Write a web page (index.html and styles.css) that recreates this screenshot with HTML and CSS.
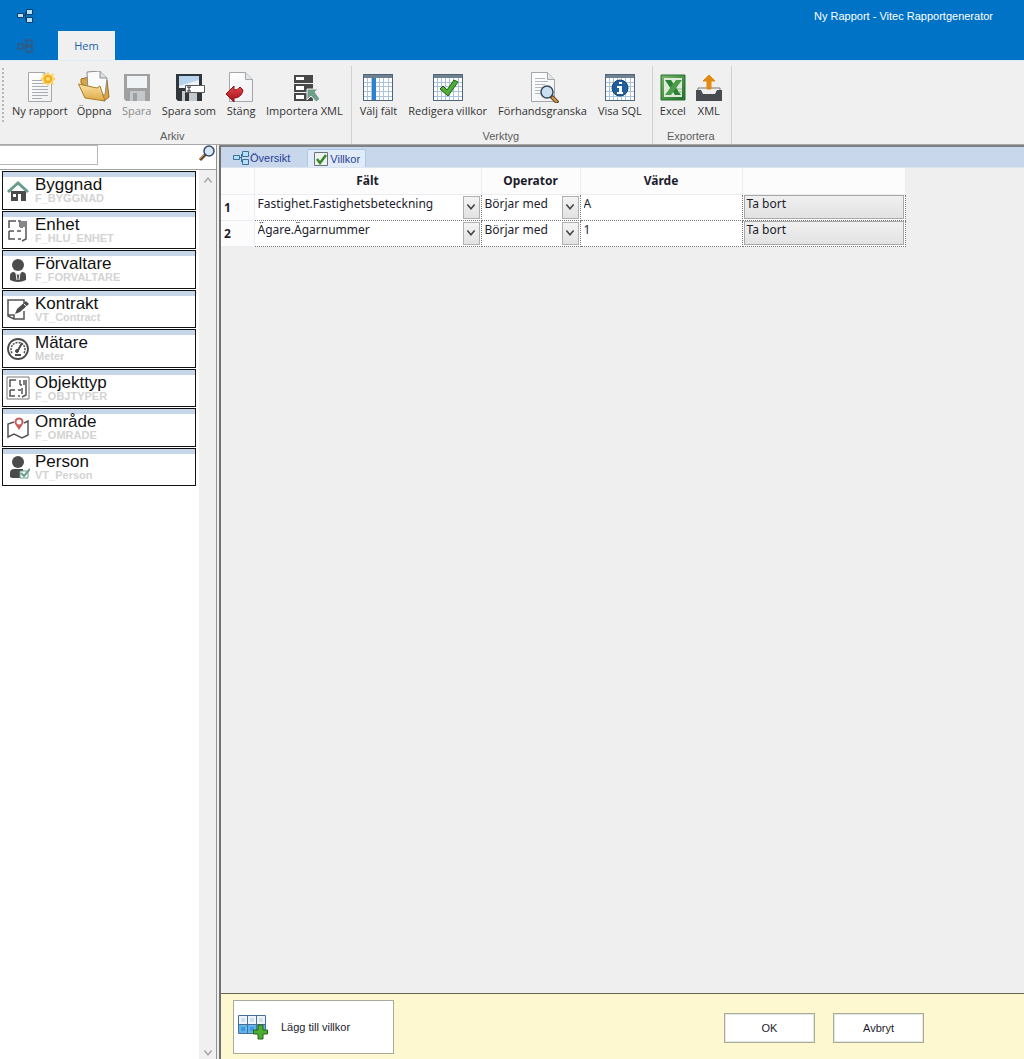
FILE: index.html
```html
<!DOCTYPE html>
<html lang="sv">
<head>
    <meta charset="UTF-8">
    <meta name="viewport" content="width=device-width, initial-scale=1.0">
    <title>Ny Rapport - Vitec Rapportgenerator</title>
    <link rel="stylesheet" href="styles.css">
</head>
<body>
    <!-- Shared shapes -->
    <svg class="defs" width="0" height="0" aria-hidden="true">
        <defs>
            <linearGradient id="folderFill" x1="0" y1="0" x2="0" y2="1">
                <stop offset="0" stop-color="#fbe3a0"/>
                <stop offset="1" stop-color="#dda844"/>
            </linearGradient>
            <linearGradient id="excelFill" x1="0" y1="0" x2="1" y2="1">
                <stop offset="0" stop-color="#78b868"/>
                <stop offset="1" stop-color="#1f6e2c"/>
            </linearGradient>
            <linearGradient id="pageFill" x1="0" y1="0" x2="1" y2="1">
                <stop offset="0" stop-color="#fff"/>
                <stop offset="1" stop-color="#eef0f2"/>
            </linearGradient>
            <linearGradient id="redFill" x1="0" y1="0" x2="0" y2="1">
                <stop offset="0" stop-color="#e4484c"/>
                <stop offset="1" stop-color="#a30f18"/>
            </linearGradient>
            <symbol id="page" viewBox="0 0 32 32">
                <path d="M4.500 1.500H20.500L27.500 8.500V30.500H4.500Z" fill="url(#pageFill)" stroke="#a3a6aa"/>
                <path d="M20.500 1.500V8.500H27.500" fill="#e4e6e8" stroke="#a3a6aa"/>
            </symbol>
            <symbol id="grid" viewBox="0 0 32 32">
                <path d="M1.500 3.500H30.500V29.500H1.500Z" fill="#fff" stroke="#506478"/>
                <path d="M1 3H31V7H1Z" fill="#6f8090"/>
                <path d="M5.500 7V29M9.500 7V29M13.500 7V29M17.500 7V29M21.500 7V29M26.500 7V29M2 11.500H30M2 15.500H30M2 20.500H30M2 25.500H30" stroke="#a9c3dc"/>
                <path d="M1.500 3.500H30.500V29.500H1.500Z" fill="none" stroke="#506478"/>
            </symbol>
            <symbol id="floppy" viewBox="0 0 32 32">
                <path d="M3 3H29V30H5L3 28Z"/>
                <path d="M6 5H26V17H6Z" fill="#f0f3f6"/>
                <path d="M9 20H24V30H9Z" fill="#c5c8cb"/>
                <path d="M12 22H16V30H12Z"/>
            </symbol>
            <symbol id="nodes" viewBox="0 0 16 14">
                <path d="M0.500 4.500H6.500V8.500H0.500ZM9.500 0.500H15.500V5.500H9.500ZM9.500 8.500H15.500V13.500H9.500Z" fill="#b4e0f7" stroke="currentColor"/>
                <path d="M7 6.500H8.500M8.500 3V11" fill="none" stroke="currentColor"/>
            </symbol>
            <symbol id="plan" viewBox="0 0 24 24">
                <path d="M10 3H3V10M3 13V21H9M12 21H15M3 13H8M11 13H15M14 3V9M14 9H17M17 3V9M20 3V21L16 23M12 3H15" fill="none" stroke="#555" stroke-width="1.500"/>
            </symbol>
            <symbol id="chevron" viewBox="0 0 10 10">
                <path d="M2 3L5 6.500L8 3" fill="none" stroke="currentColor" stroke-width="1.300"/>
            </symbol>
        </defs>
    </svg>

    <div class="app">
        <header class="titlebar">
            <div class="title-row">
                <svg class="app-icon" viewBox="0 0 16 14"><use href="#nodes"/></svg>
                <h1>Ny Rapport - Vitec Rapportgenerator</h1>
            </div>
            <div class="menu-row">
                <button class="app-menu" aria-label="Meny">
                    <svg viewBox="0 0 16 14"><path d="M1 5H6V10H1ZM9 1H15V6H9ZM9 8H15V13H9ZM6 7H9" fill="none" stroke="#35597c" stroke-width="1.500"/></svg>
                </button>
                <button class="menu-tab">Hem</button>
            </div>
        </header>

        <nav class="ribbon">
            <div class="grip"></div>
            <section class="group group-file">
                <div class="tools">
                    <button class="tool">
                        <svg viewBox="0 0 32 32">
                            <use href="#page"/>
                            <path d="M8 9.500H18M8 12.500H22M8 15.500H24M8 18.500H24M8 21.500H24M8 24.500H24M8 27.500H18" stroke="#a9acb0"/>
                            <path d="M24 0L26 4L30 2L29 6L32 8L29 10L30 14L26 12L24 16L22 12L18 14L19 10L16 8L19 6L18 2L22 4Z" fill="#fbd468"/>
                            <circle cx="24" cy="8" r="4" fill="#f6a91a"/>
                            <circle cx="24" cy="8" r="2" fill="#ffe480"/>
                        </svg>
                        <span>Ny rapport</span>
                    </button>
                    <button class="tool">
                        <svg viewBox="0 0 32 32">
                            <path d="M3 12V8L11 6L13 9H29L31 26L26 30Z" fill="#d8a542" stroke="#9b7224"/>
                            <path d="M9 1L22 0L29 7L27 24L10 20Z" fill="#fafbfc" stroke="#8b8e92"/>
                            <path d="M22 0L22 7H29" fill="#dde0e3" stroke="#8b8e92"/>
                            <path d="M0.500 13L19 17L22 15L27 30L7 27Z" fill="url(#folderFill)" stroke="#a87d2c"/>
                        </svg>
                        <span>Öppna</span>
                    </button>
                    <button class="tool" disabled>
                        <svg viewBox="0 0 32 32" fill="#a0a0a0"><use href="#floppy"/></svg>
                        <span>Spara</span>
                    </button>
                    <button class="tool">
                        <svg viewBox="0 0 32 32" fill="#30363c">
                            <use href="#floppy"/>
                            <path d="M6 5H26V9L6 15Z" fill="#b7d3ed"/>
                            <path d="M12.500 14.500H31.500V21.500H12.500Z" fill="#fff" stroke="#555b61"/>
                            <path d="M14 16H18M16 16V20M14 20H18" stroke="#222"/>
                        </svg>
                        <span>Spara som</span>
                    </button>
                    <button class="tool">
                        <svg viewBox="0 0 32 32">
                            <use href="#page"/>
                            <path d="M1 23L9 15V19C12 19 13 18 15 16L18 19C17 25 13 27 9 27V31Z" fill="url(#redFill)" stroke="#8f1118"/>
                        </svg>
                        <span>Stäng</span>
                    </button>
                    <button class="tool">
                        <svg viewBox="0 0 32 32">
                            <path d="M6 4H25V12H6ZM6 13H25V21H6ZM6 22H25V30H6Z" fill="#484848"/>
                            <path d="M8 6H16V9H8ZM8 15H16V19H8ZM8 24H16V28H8Z" fill="#fff"/>
                            <path d="M19 18H30L27 21L32 28L28 31L23 25L19 29Z" fill="#6f9e8b" stroke="#f0f0f0"/>
                        </svg>
                        <span>Importera XML</span>
                    </button>
                </div>
                <h2>Arkiv</h2>
            </section>
            <section class="group group-tools">
                <div class="tools">
                    <button class="tool">
                        <svg viewBox="0 0 32 32"><use href="#grid"/><path d="M10 7H14V29H10Z" fill="#2b82cf"/></svg>
                        <span>Välj fält</span>
                    </button>
                    <button class="tool">
                        <svg viewBox="0 0 32 32"><use href="#grid"/><path d="M8 18L11 15L15 19L22 9L26 11L16 25Z" fill="#4fae35" stroke="#1f5a16"/></svg>
                        <span>Redigera villkor</span>
                    </button>
                    <button class="tool">
                        <svg viewBox="0 0 32 32">
                            <use href="#page"/>
                            <path d="M8 7.500H18M8 10.500H21M8 13.500H18M8 16.500H15M8 19.500H14M8 22.500H14" stroke="#b5b8bc"/>
                            <path d="M24 25L31 32" stroke="#5b3d20" stroke-width="4"/>
                            <path d="M25 26L30 31" stroke="#dc9c4c" stroke-width="2"/>
                            <circle cx="20" cy="21" r="6" fill="#cbe0f3" stroke="#3a4a59" stroke-width="1.500"/>
                        </svg>
                        <span>Förhandsgranska</span>
                    </button>
                    <button class="tool">
                        <svg viewBox="0 0 32 32">
                            <use href="#grid"/>
                            <circle cx="16" cy="17" r="8" fill="#1f5f9f" stroke="#174672"/>
                            <path d="M15 11H18V13H15ZM13 15H18V21H19V23H13V21H15V17H13Z" fill="#fff"/>
                        </svg>
                        <span>Visa SQL</span>
                    </button>
                </div>
                <h2>Verktyg</h2>
            </section>
            <section class="group group-export">
                <div class="tools">
                    <button class="tool">
                        <svg viewBox="0 0 32 32">
                            <path d="M4 4H28V29H4Z" fill="url(#excelFill)" stroke="#286f30"/>
                            <path d="M7 7H25V26H7Z" fill="#dcebd8"/>
                            <path d="M8 9H14L24 24H18Z" fill="#2c8138"/>
                            <path d="M19 9H25L14 24H8Z" fill="#4b9d4b"/>
                            <path d="M20 18H25M21 21H25" stroke="#8bbd88"/>
                        </svg>
                        <span>Excel</span>
                    </button>
                    <button class="tool">
                        <svg viewBox="0 0 32 32">
                            <path d="M3 19H8L10 23H22L24 19H29V30H3Z" fill="#484b50"/>
                            <path d="M5 19V17H27V19" fill="none" stroke="#777"/>
                            <path d="M16 4L22 10H18V18H14V10H10Z" fill="#e28a12" stroke="#e28a12"/>
                        </svg>
                        <span>XML</span>
                    </button>
                </div>
                <h2>Exportera</h2>
            </section>
        </nav>

        <div class="workspace">
            <aside class="sidebar">
                <div class="search">
                    <input type="text" aria-label="Sök">
                    <button aria-label="Sök">
                        <svg viewBox="0 0 18 18">
                            <path d="M2 15L8 9" stroke="#684423" stroke-width="3"/>
                            <path d="M2 14L6 10" stroke="#c98a52" stroke-width="1"/>
                            <circle cx="11" cy="6" r="5" fill="#d5e8f7" stroke="#354a66" stroke-width="1.500"/>
                        </svg>
                    </button>
                </div>
                <div class="list-area">
                    <ul class="entities">
                        <li>
                            <svg viewBox="0 0 24 24"><path d="M5 12H20V22H15V15H12V22H5Z" fill="#4b4b4b"/><path d="M7 15H10V18H7Z" fill="#fff"/><path d="M2 13L12 4L22 13" fill="none" stroke="#6a9d89" stroke-width="3"/></svg>
                            <div><strong>Byggnad</strong><small>F_BYGGNAD</small></div>
                        </li>
                        <li>
                            <svg viewBox="0 0 24 24"><use href="#plan"/><path d="M14 3H20V9H14Z" fill="#888"/></svg>
                            <div><strong>Enhet</strong><small>F_HLU_ENHET</small></div>
                        </li>
                        <li>
                            <svg viewBox="0 0 24 24"><circle cx="12" cy="7" r="6" fill="#4b4b4b"/><path d="M4 22V18Q4 14 8 14L12 17L16 14Q20 14 20 18V22Q12 26 4 22Z" fill="#4b4b4b"/><path d="M10 15L11 22M14 15L13 22" stroke="#fff"/></svg>
                            <div><strong>Förvaltare</strong><small>F_FORVALTARE</small></div>
                        </li>
                        <li>
                            <svg viewBox="0 0 24 24"><path d="M18 14V22H8L2 19V3H18V6M2 18L8 18V22" fill="none" stroke="#555" stroke-width="1.500"/><path d="M9 17L11 12L20 4L23 7L14 15Z" fill="#4b4b4b"/><path d="M18 7L21 10" stroke="#fff"/></svg>
                            <div><strong>Kontrakt</strong><small>VT_Contract</small></div>
                        </li>
                        <li>
                            <svg viewBox="0 0 24 24" fill="none" stroke="#4b4b4b"><circle cx="12" cy="12" r="10" stroke-width="1.800"/><path d="M6 16A7 7 0 1 1 18 16" stroke-width="1.500" stroke-dasharray="2 1"/><path d="M11 15L16 6M9 18H15" stroke-width="2"/><circle cx="11" cy="14" r="1.500" fill="#4b4b4b"/></svg>
                            <div><strong>Mätare</strong><small>Meter</small></div>
                        </li>
                        <li>
                            <svg viewBox="0 0 24 24"><path d="M1 1H23V23H1Z" fill="none" stroke="#777"/><path d="M10 4H4V11M4 14V20H9M4 14H9M12 14H15M14 4V9M18 4V9M14 9H16M20 4V19L16 21M12 20H14M16 12V18" fill="none" stroke="#555" stroke-width="1.500"/></svg>
                            <div><strong>Objekttyp</strong><small>F_OBJTYPER</small></div>
                        </li>
                        <li>
                            <svg viewBox="0 0 24 24"><path d="M8 6L2 8V21L8 18L16 22L22 19V5L18 7" fill="none" stroke="#555" stroke-width="1.500"/><path d="M13 14L9 8A4.500 4.500 0 1 1 17 8Z" fill="#c85b58"/><circle cx="13" cy="6" r="2.500" fill="#fff"/></svg>
                            <div><strong>Område</strong><small>F_OMRADE</small></div>
                        </li>
                        <li>
                            <svg viewBox="0 0 24 24"><circle cx="12" cy="7" r="6" fill="#4b4b4b"/><path d="M4 22V18Q4 14 8 14H17V23H6Z" fill="#4b4b4b"/><path d="M14 16H22V23H14Z" fill="#fff" stroke="#6a9d89"/><path d="M15 18L18 21L24 14" fill="none" stroke="#6a9d89" stroke-width="2"/></svg>
                            <div><strong>Person</strong><small>VT_Person</small></div>
                        </li>
                    </ul>
                    <div class="scrollbar">
                        <svg class="up" viewBox="0 0 10 10"><use href="#chevron"/></svg>
                        <svg viewBox="0 0 10 10"><use href="#chevron"/></svg>
                    </div>
                </div>
            </aside>

            <main class="content">
                <div class="tabs">
                    <button class="tab">
                        <svg class="tab-nodes" viewBox="0 0 16 14"><use href="#nodes"/></svg>
                        Översikt
                    </button>
                    <button class="tab active">
                        <svg viewBox="0 0 16 16"><path d="M1.500 1.500H14.500V14.500H1.500Z" fill="#eef2ee" stroke="#68747c"/><path d="M4 8L7 12L13 4" fill="none" stroke="#39842c" stroke-width="2.500"/></svg>
                        Villkor
                    </button>
                </div>
                <div class="table-area">
                    <table>
                        <colgroup>
                            <col class="col-number">
                            <col class="col-field">
                            <col class="col-operator">
                            <col class="col-value">
                            <col class="col-action">
                        </colgroup>
                        <thead>
                            <tr><th></th><th>Fält</th><th>Operator</th><th>Värde</th><th></th></tr>
                        </thead>
                        <tbody>
                            <tr>
                                <th scope="row">1</th>
                                <td><div class="dropdown"><select aria-label="Fält"><option>Fastighet.Fastighetsbeteckning</option></select><span><svg viewBox="0 0 10 10"><use href="#chevron"/></svg></span></div></td>
                                <td><div class="dropdown"><select aria-label="Operator"><option>Börjar med</option></select><span><svg viewBox="0 0 10 10"><use href="#chevron"/></svg></span></div></td>
                                <td><input type="text" aria-label="Värde" value="A"></td>
                                <td><button class="remove">Ta bort</button></td>
                            </tr>
                            <tr>
                                <th scope="row">2</th>
                                <td><div class="dropdown"><select aria-label="Fält"><option>Ägare.Ägarnummer</option></select><span><svg viewBox="0 0 10 10"><use href="#chevron"/></svg></span></div></td>
                                <td><div class="dropdown"><select aria-label="Operator"><option>Börjar med</option></select><span><svg viewBox="0 0 10 10"><use href="#chevron"/></svg></span></div></td>
                                <td><input type="text" aria-label="Värde" value="1"></td>
                                <td><button class="remove">Ta bort</button></td>
                            </tr>
                        </tbody>
                    </table>
                </div>
                <footer class="actions">
                    <button class="add">
                        <svg viewBox="0 0 30 26">
                            <path d="M0.500 1.500H27.500V19.500H0.500Z" fill="#eef4fa" stroke="#44709b"/>
                            <path d="M1 10H27V19H1Z" fill="#62b4e8"/>
                            <path d="M9.500 1V20M18.500 1V20M0 10.500H28" stroke="#44709b"/>
                            <path d="M3 4H7V8H3ZM12 4H16V8H12ZM21 4H25V8H21Z" fill="#cfdff0"/>
                            <path d="M3 13H7V17H3ZM12 13H16V17H12Z" fill="#399bdb"/>
                            <path d="M20 11H25V16H29.500V20H25V25H20V20H15.500V16H20Z" fill="#4fae2e" stroke="#22651a"/>
                        </svg>
                        Lägg till villkor
                    </button>
                    <div class="confirm">
                        <button>OK</button>
                        <button>Avbryt</button>
                    </div>
                </footer>
            </main>
        </div>
    </div>
</body>
</html>
```
FILE: styles.css
```css
* {
    box-sizing: border-box;
}
body {
    margin: 0;
    font-family: "Liberation Sans", Arial, sans-serif;
    font-size: 11px;
    color: #1c1c2c;
    background-color: #f0f0f0;
}
button, input, select {
    font: inherit;
    color: inherit;
    margin: 0;
    padding: 0;
    border: none;
    border-radius: 0;
    background: none;
}
h1, h2 {
    margin: 0;
    font-weight: normal;
}
svg {
    display: block;
    flex: none;
}
.defs {
    position: absolute;
}
.app {
    display: flex;
    flex-direction: column;
    min-height: 100vh;
}

/* Title bar */
.titlebar {
    background-color: #0173c7;
}
.title-row {
    display: flex;
    justify-content: space-between;
    align-items: center;
    height: 31px;
    padding: 0 31px 0 17px;
}
.app-icon {
    width: 16px;
    height: 14px;
    color: #123d66;
}
h1 {
    font-size: 11px;
    color: #fff;
}
.menu-row {
    display: flex;
    height: 29px;
}
.app-menu {
    width: 58px;
    padding-left: 17px;
}
.app-menu svg {
    width: 16px;
    height: 14px;
}
.menu-tab {
    width: 57px;
    font-family: "Open Sans", sans-serif;
    color: #2464ae;
    background-color: #f0f0f0;
}

/* Ribbon */
.ribbon {
    display: flex;
    height: 85px;
    padding-top: 5px;
    border-top: 1px solid #dceef8;
    border-bottom: 1px solid #a8a8a8;
}
.grip {
    width: 4px;
    height: 54px;
    margin-top: 2px;
    border-right: 2px dotted #b8b8b8;
}
.group {
    display: flex;
    flex-direction: column;
    justify-content: space-between;
    padding: 5px 4px 1px;
    border-right: 1px solid #d0d0d0;
}
.tools {
    display: flex;
    gap: 1px;
}
.tool {
    display: flex;
    flex-direction: column;
    align-items: center;
    gap: 1px;
    padding: 0 4px;
    font-family: "Open Sans", sans-serif;
    line-height: 14px;
    color: #333;
    white-space: nowrap;
}
.tool svg {
    width: 32px;
    height: 32px;
}
.tool:disabled {
    color: #8c8c8c;
}
.group-file h2 {
    padding-right: 10px;
}
.group-tools {
    padding-right: 6px;
}
.group-tools .tools {
    gap: 3px;
}
.group-export {
    padding-left: 2px;
}
.group-export .tools {
    gap: 0;
}
.group-export .tool {
    padding: 0 2px;
}
h2 {
    font-size: 11px;
    line-height: 14px;
    text-align: center;
    color: #5c5c5c;
}

/* Sidebar */
.workspace {
    display: flex;
    flex: 1;
}
.sidebar {
    display: flex;
    flex-direction: column;
    flex: none;
    width: 217px;
    background-color: #fff;
    border-right: 1px solid #929292;
}
.search {
    display: flex;
    justify-content: space-between;
    align-items: flex-start;
    height: 25px;
    border-bottom: 1px solid #a0a0a0;
}
.search input {
    width: 98px;
    height: 20px;
    border: 1px solid #b8b8b8;
    border-left: none;
}
.search svg {
    width: 18px;
    height: 18px;
}
.list-area {
    display: flex;
    justify-content: space-between;
    flex: 1;
}
.entities {
    display: grid;
    grid-template-rows: repeat(8, 1fr);
    gap: 1px;
    align-self: flex-start;
    width: 194px;
    min-height: 315px;
    margin: 1px 0 0 2px;
    padding: 0;
    list-style: none;
}
.entities li {
    display: flex;
    align-items: center;
    gap: 5px;
    padding: 1px 0 0 3px;
    border: 1px solid #111;
    box-shadow: inset 0 5px #c8d6ea;
}
.entities svg {
    width: 24px;
    height: 24px;
}
.entities strong {
    display: block;
    font-size: 17px;
    font-weight: normal;
    line-height: 16px;
    color: #111;
}
.entities small {
    display: block;
    font-size: 11px;
    font-weight: bold;
    line-height: 11px;
    color: #d3d3d3;
}
.scrollbar {
    display: flex;
    flex-direction: column;
    justify-content: space-between;
    align-items: center;
    width: 17px;
    padding: 4px 0 0;
    color: #a8a8a8;
    background-color: #f0f0f0;
}
.scrollbar svg {
    width: 12px;
    height: 12px;
}
.scrollbar .up {
    transform: rotate(180deg);
}

/* Conditions */
.content {
    display: flex;
    flex-direction: column;
    flex: 1;
    margin-left: 2px;
    border-top: 2px solid #808080;
    border-left: 2px solid #707070;
    background-color: #efefef;
}
.tabs {
    display: flex;
    gap: 5px;
    height: 21px;
    padding: 2px 0 0 4px;
    background-color: #c8d7ec;
    border-bottom: 1px solid #dce6f2;
}
.tab {
    display: flex;
    align-items: center;
    gap: 1px;
    padding: 0 5px;
    color: #263f94;
}
.tab svg {
    width: 16px;
    height: 16px;
}
.tab:first-child {
    padding: 0 12px 0 8px;
}
.tab.active {
    background-color: #e1ecf8;
    border: 1px solid #a9c9e8;
    border-bottom: none;
    border-radius: 2px 2px 0 0;
}
.tab-nodes {
    color: #39729b;
}
.table-area {
    flex: 1;
}
table {
    width: 684px;
    table-layout: fixed;
    border-collapse: collapse;
    font-family: "Noto Sans", sans-serif;
    font-size: 12px;
    background-color: #fff;
}
.col-number {
    width: 33px;
}
.col-field {
    width: 227px;
}
.col-operator {
    width: 99px;
}
.col-value {
    width: 162px;
}
.col-action {
    width: 163px;
}
th {
    height: 26px;
    padding: 0;
    background-color: #fcfcfc;
    border-right: 1px solid #e9eef3;
    border-bottom: 1px solid #e9eef3;
}
tbody th {
    padding-left: 3px;
    text-align: left;
}
td {
    height: 26px;
    padding: 0;
    border-right: 1px dotted #777;
    border-bottom: 1px dotted #777;
}
td input, td select {
    display: block;
    width: 100%;
    height: 25px;
    padding: 0 3px 7px;
    line-height: 18px;
    appearance: none;
}
.dropdown {
    position: relative;
}
.dropdown span {
    position: absolute;
    top: 1px;
    right: 1px;
    display: flex;
    align-items: center;
    justify-content: center;
    width: 17px;
    height: 23px;
    color: #444;
    background: linear-gradient(#f3f3f3, #e2e2e2);
    border: 1px solid #b0b0b0;
    pointer-events: none;
}
.dropdown svg {
    width: 12px;
    height: 12px;
}
.remove {
    display: block;
    width: calc(100% - 2px);
    height: 24px;
    margin-left: 1px;
    padding: 0 2px 6px;
    line-height: 16px;
    text-align: left;
    background: linear-gradient(#f0f0f0, #e2e2e2);
    border: 1px solid #a8a8a8;
}

/* Footer */
.actions {
    display: flex;
    justify-content: space-between;
    align-items: flex-start;
    padding: 6px 100px 5px 12px;
    background-color: #fdf8cf;
    border-top: 1px solid #66664c;
}
.actions button {
    background-color: #fff;
    border: 1px solid #a9aa9c;
}
.actions .add {
    display: flex;
    align-items: center;
    gap: 13px;
    width: 161px;
    height: 54px;
    padding-left: 4px;
}
.add svg {
    width: 30px;
    height: 26px;
}
.confirm {
    display: flex;
    gap: 18px;
    padding-top: 13px;
}
.confirm button {
    width: 91px;
    height: 30px;
    box-shadow: inset 0 0 0 1px #e4e8e4;
}
```
